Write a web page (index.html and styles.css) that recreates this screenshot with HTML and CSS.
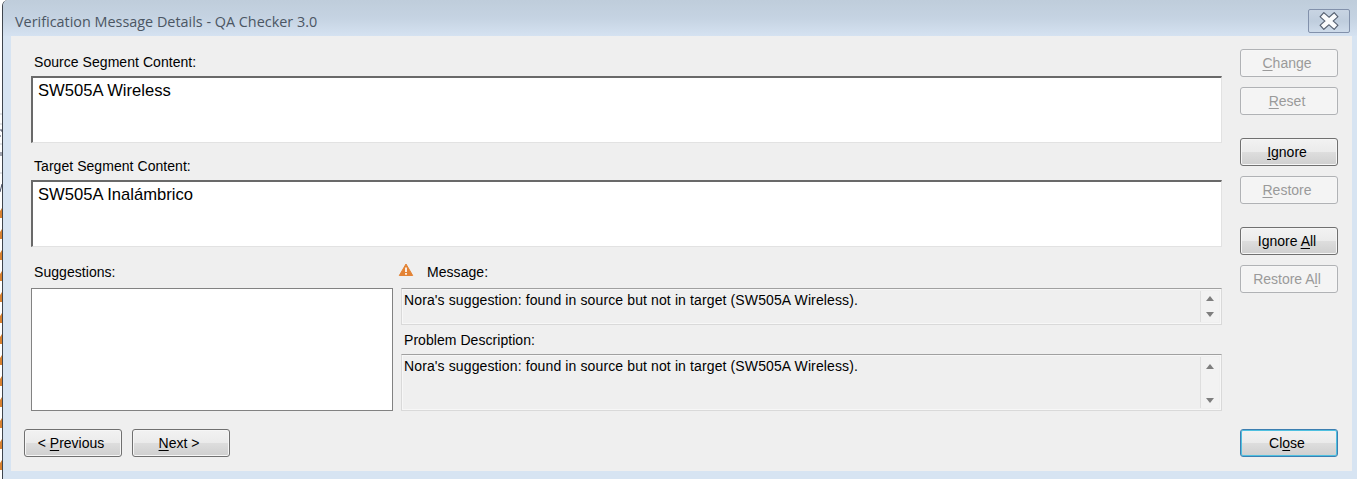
FILE: index.html
```
<!DOCTYPE html>
<html lang="en">
<head>
    <meta charset="UTF-8">
    <title>Verification Message Details - QA Checker 3.0</title>
    <link rel="stylesheet" href="styles.css">
</head>
<body>
    <div class="backdrop">
        <svg width="2" height="479">
            <defs>
                <pattern id="flags" y="208" width="2" height="21" patternUnits="userSpaceOnUse">
                    <path d="M2 0V10H0V3z" fill="#d9812f"/>
                </pattern>
            </defs>
            <rect width="2" height="479" fill="#fff"/>
            <path d="M0 114h2M0 124h2M0 144h2M0 173h2" stroke="#c4c8ce"/>
            <path d="M0 130h2v2M0 136h1M1 152v4M2 184l-2 8" stroke="#444a60" fill="none"/>
            <rect y="208" width="2" height="262" fill="url(#flags)"/>
        </svg>
    </div>

    <div class="window">
        <div class="titlebar">
            <span class="title">Verification Message Details - QA Checker 3.0</span>
            <button class="window-close" aria-label="Close window">
                <svg width="20" height="18" viewBox="0 0 20 18">
                    <path d="M5 4.500l10 9M15 4.500l-10 9" stroke="#566071" stroke-width="6.600" stroke-linecap="square"/>
                    <path d="M5 4.500l10 9M15 4.500l-10 9" stroke="#fafbfc" stroke-width="4.400" stroke-linecap="square"/>
                </svg>
            </button>
        </div>

        <div class="dialog">
            <div class="main">
                <div class="label source-label">Source Segment Content:</div>
                <div class="segment">SW505A Wireless</div>
                <div class="label target-label">Target Segment Content:</div>
                <div class="segment">SW505A Inalámbrico</div>

                <div class="details">
                    <div class="suggestions">
                        <div class="label list-label">Suggestions:</div>
                        <div class="list"></div>
                    </div>
                    <div class="messages">
                        <div class="label message-label">
                            <svg class="warning" width="16" height="15" viewBox="0 0 16 15">
                                <path d="M8 1L14.700 12.500H1.300z" fill="#e38335" stroke="#e38335" stroke-linejoin="round"/>
                                <path d="M8 4.500v4.500M8 10v1.700" stroke="#fff" stroke-width="1.700"/>
                            </svg>
                            Message:
                        </div>
                        <div class="readonly short">
                            <span>Nora's suggestion: found in source but not in target (SW505A Wireless).</span>
                            <div class="scrollbar"><i class="up"></i><i class="down"></i></div>
                        </div>
                        <div class="label problem-label">Problem Description:</div>
                        <div class="readonly tall">
                            <span>Nora's suggestion: found in source but not in target (SW505A Wireless).</span>
                            <div class="scrollbar"><i class="up"></i><i class="down"></i></div>
                        </div>
                    </div>
                </div>

                <div class="nav">
                    <button class="btn">&lt; <u>P</u>revious</button>
                    <button class="btn"><u>N</u>ext &gt;</button>
                </div>
            </div>

            <div class="side">
                <div class="group">
                    <button class="btn" disabled><u>C</u>hange</button>
                    <button class="btn" disabled><u>R</u>eset</button>
                </div>
                <div class="group">
                    <button class="btn"><u>I</u>gnore</button>
                    <button class="btn" disabled><u>R</u>estore</button>
                </div>
                <div class="group">
                    <button class="btn">Ignore <u>A</u>ll</button>
                    <button class="btn" disabled>Restore A<u>l</u>l</button>
                </div>
                <button class="btn default">Cl<u>o</u>se</button>
            </div>
        </div>
    </div>
</body>
</html>
```
FILE: styles.css
```
* {
    box-sizing: border-box;
}
body {
    margin: 0;
    height: 479px;
    display: flex;
    overflow: hidden;
    background: #fff;
    font-family: "Liberation Sans", Arial, sans-serif;
    font-size: 14px;
    color: #000;
}
.backdrop {
    width: 2px;
}
.backdrop svg {
    display: block;
}
.window {
    flex: 1;
    height: 479px;
    border-left: 1px solid #3f454d;
    border-top-left-radius: 6px;
    background: #d7e4f2;
    padding: 0 5px 8px 8px;
}
.titlebar {
    display: flex;
    justify-content: space-between;
    height: 36px;
    margin: 0 -5px 0 -8px;
    padding: 9px 7px 0 12px;
    border-top-left-radius: 6px;
    background: linear-gradient(#bfcddb, #c5d3e2 50%, #d5e2f1);
}
.title {
    font-family: "Open Sans", "Noto Sans", sans-serif;
    font-size: 14.4px;
    line-height: 26px;
    color: #4b5663;
}
.window-close {
    display: flex;
    align-items: center;
    justify-content: center;
    width: 42px;
    height: 24px;
    padding: 0;
    border: 1px solid #8291ab;
    border-radius: 2px;
    background: linear-gradient(#c8d4e3, #bfcddd 50%, #cedbea);
}
.dialog {
    display: flex;
    justify-content: space-between;
    height: 435px;
    padding: 13px 14px 14px 13px;
    background: #efefef;
}
.main {
    width: 1198px;
    padding: 4px 0 0 7px;
}
.label {
    line-height: 18px;
    padding-left: 3px;
    letter-spacing: 0.05px;
}
.source-label {
    padding-bottom: 5px;
}
.target-label {
    padding-top: 14px;
    padding-bottom: 5px;
}
.segment {
    height: 67px;
    padding: 3px 5px;
    border: 2px solid #696969;
    border-right: 1px solid #e2e2e2;
    border-bottom: 1px solid #e2e2e2;
    background: #fff;
    font-size: 16.6px;
    line-height: 20px;
}
.details {
    display: flex;
    gap: 8px;
    height: 164px;
}
.suggestions {
    width: 362px;
}
.list-label {
    padding-top: 16px;
    padding-bottom: 7px;
}
.list {
    height: 123px;
    border: 1px solid #828282;
    background: #fff;
}
.messages {
    flex: 1;
}
.message-label {
    display: flex;
    padding: 16px 0 7px 0;
    margin-left: -3px;
}
.warning {
    margin-right: 13px;
}
.readonly {
    display: flex;
    justify-content: space-between;
    border: 1px solid #d9d9d9;
    border-top-color: #a0a0a0;
    box-shadow: inset 0 0 0 1px #f7f7f7;
    padding: 2px 2px 2px 2px;
    line-height: 18px;
    letter-spacing: 0.12px;
}
.short {
    height: 37px;
}
.problem-label {
    padding: 6px 0 5px 3px;
}
.tall {
    height: 57px;
}
.scrollbar {
    display: flex;
    flex-direction: column;
    justify-content: space-between;
    align-items: center;
    width: 19px;
    padding: 5px 0;
    border-left: 1px solid #dedede;
    background: #f2f2f2;
}
.scrollbar i {
    border: 4px solid transparent;
}
.scrollbar .up {
    border-top: 0;
    border-bottom: 5px solid #7e7e7e;
}
.scrollbar .down {
    border-bottom: 0;
    border-top: 5px solid #7e7e7e;
}
.tall .scrollbar {
    padding: 7px 0 5px;
}
.nav {
    display: flex;
    gap: 10px;
    margin: 18px 0 0 -7px;
}
.btn {
    width: 98px;
    height: 28px;
    padding: 0 4px 0 0;
    border: 1px solid #707070;
    border-radius: 3px;
    background: linear-gradient(#f2f2f2, #ebebeb 48%, #dddddd 52%, #cfcfcf);
    box-shadow: inset 0 0 0 1px #f6f6f6;
    font-family: inherit;
    font-size: 14px;
    color: #000;
}
.btn u {
    text-underline-offset: 2px;
}
.btn:disabled {
    border-color: #b0b2b5;
    background: #f4f4f4;
    color: #9a9a9a;
}
.btn.default {
    margin-top: auto;
    border-color: #3c7fb1;
    box-shadow: inset 0 0 0 1px #4fc0e0;
}
.side {
    display: flex;
    flex-direction: column;
    width: 98px;
}
.group {
    display: flex;
    flex-direction: column;
    gap: 10px;
    margin-bottom: 23px;
}
```
